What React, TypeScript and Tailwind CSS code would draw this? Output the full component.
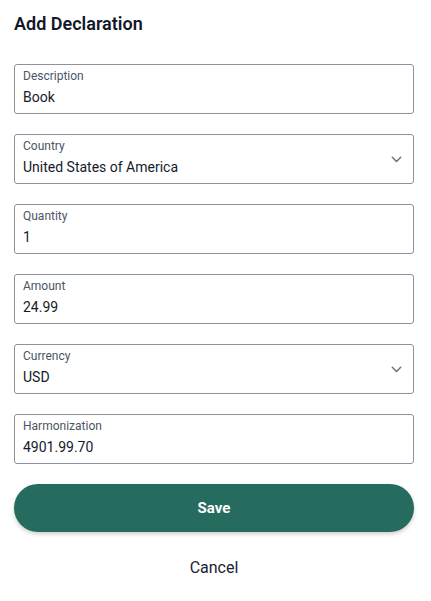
import React from "react";

function Chevron() {
  return (
    <svg width="11" height="7" viewBox="0 0 11 7" fill="none" className="shrink-0">
      <path d="M1.3 1.3 L5.5 5.5 L9.7 1.3" stroke="#6b7280" strokeWidth="1.5" strokeLinecap="round" strokeLinejoin="round" />
    </svg>
  );
}

function Field({ label, value, select }: { label: string; value: string; select?: boolean }) {
  return (
    <div className="flex h-[50px] items-center rounded-[3px] border border-[#8b93a1] bg-white pl-[8px] pr-[11px]">
      <div className="flex h-full flex-1 flex-col pt-[3px]">
        <span className="text-[12px] leading-[16px] text-[#4b5565]">{label}</span>
        <span className="mt-[3px] text-[14px] leading-[20px] text-[#141b2b]">{value}</span>
      </div>
      {select && <Chevron />}
    </div>
  );
}

export default function App() {
  return (
    <div className="min-h-[601px] w-[431px] bg-white pl-[14px] pr-[17px] pt-[13px] font-['Roboto',sans-serif]">
      <h1 className="text-[18px] font-semibold leading-[22px] text-[#111827]">Add Declaration</h1>
      <div className="mt-[29px] flex flex-col gap-[20px]">
        <Field label="Description" value="Book" />
        <Field label="Country" value="United States of America" select />
        <Field label="Quantity" value="1" />
        <Field label="Amount" value="24.99" />
        <Field label="Currency" value="USD" select />
        <Field label="Harmonization" value="4901.99.70" />
      </div>
      <button className="mt-[20px] flex h-[48px] w-full items-center justify-center rounded-full bg-[#256b5e] text-[15px] font-bold text-white shadow-[0_2px_4px_rgba(0,0,0,0.2)]">
        Save
      </button>
      <button className="mt-[24px] flex h-[24px] w-full items-center justify-center text-[16px] text-[#1a2233]">
        Cancel
      </button>
    </div>
  );
}
